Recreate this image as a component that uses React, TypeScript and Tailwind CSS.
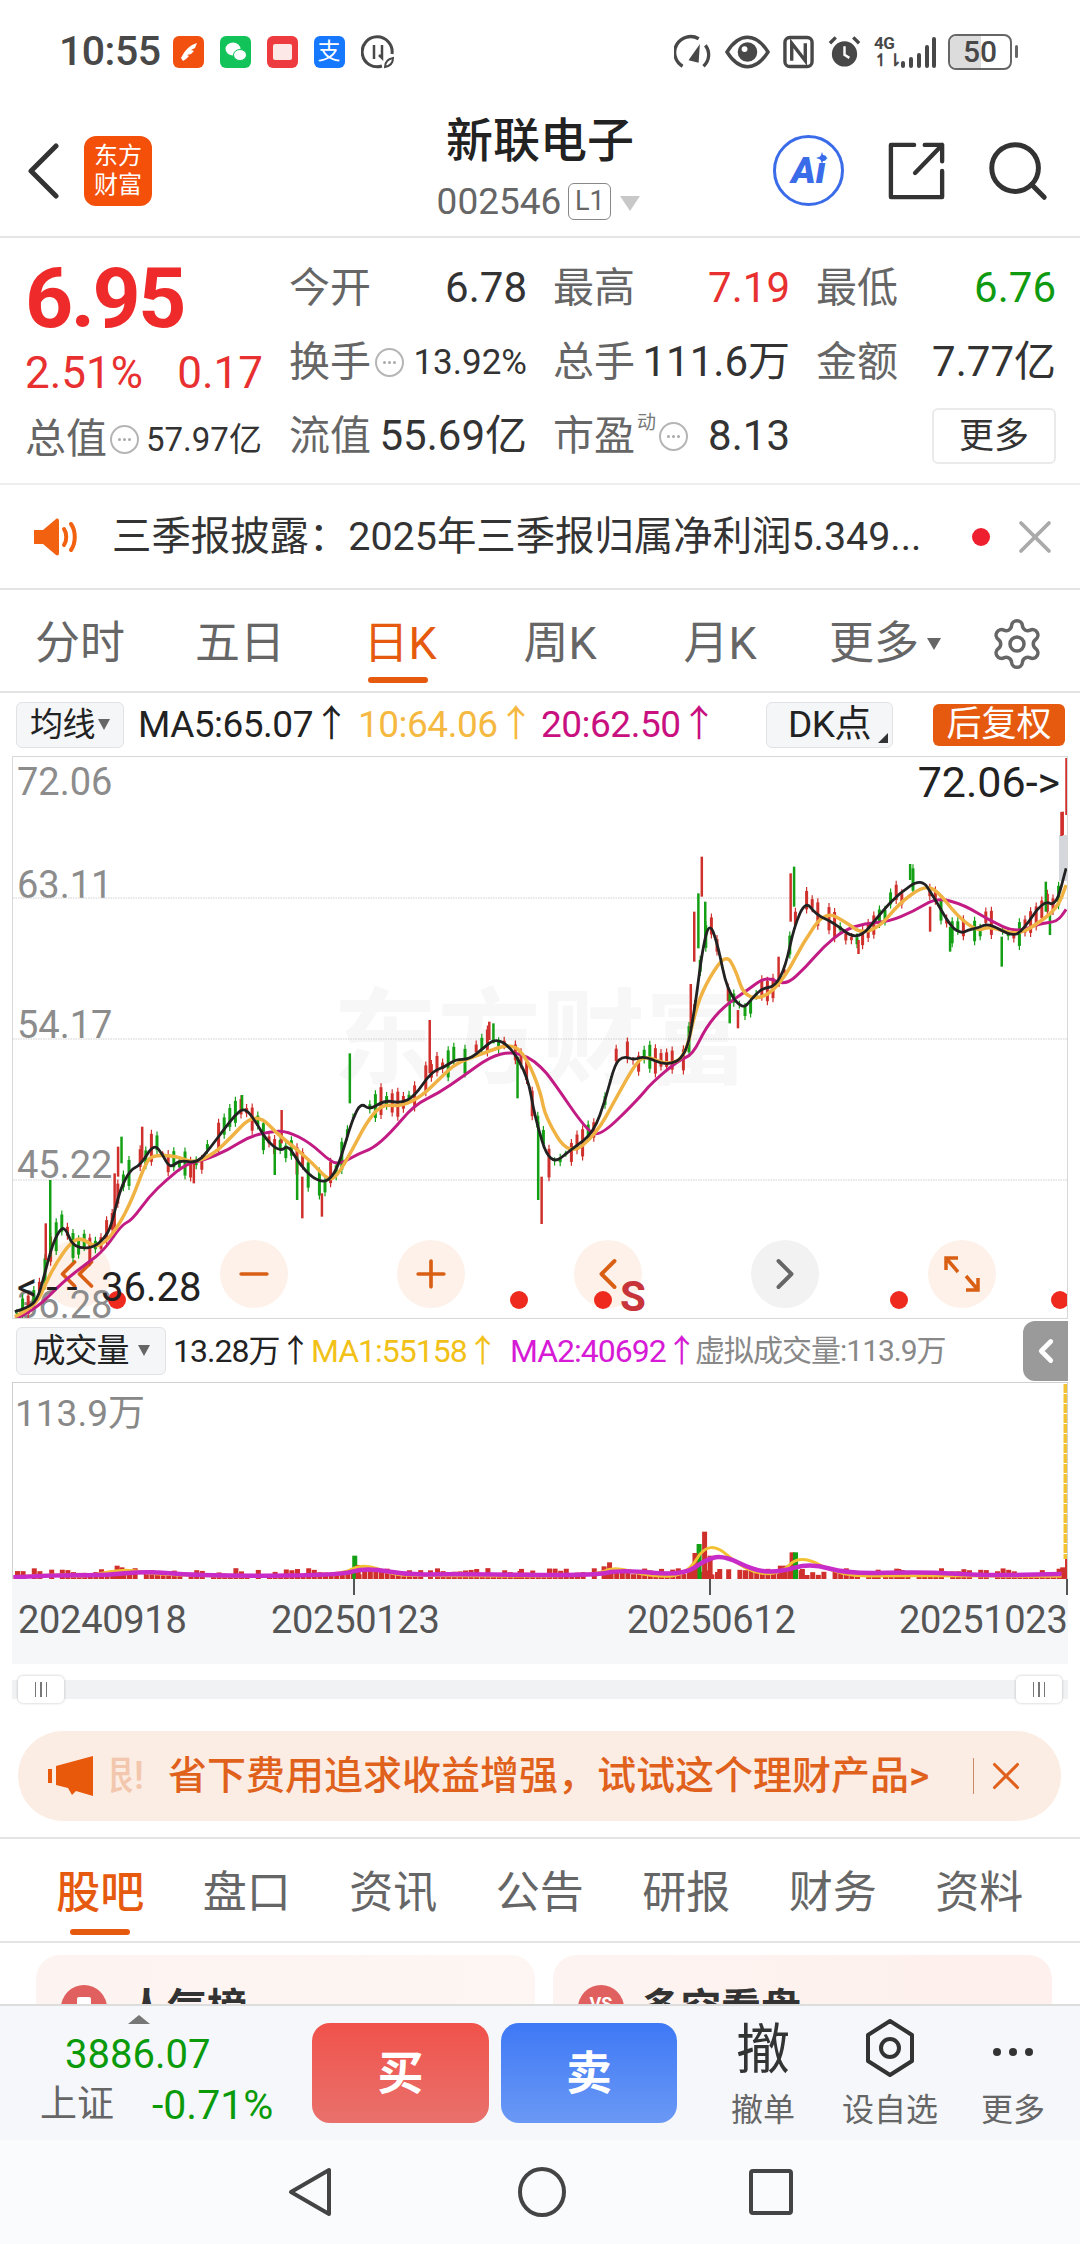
import React from 'react';
import { Settings, Search, ChevronLeft, ChevronRight, Minus, Plus, ChevronsLeft, X } from 'lucide-react';

type Pt = number[];

// traced from the crops, each with its own offset and scale
const z8 = (p: Pt[]) => p.map(([x, y]) => [x / 2.904, 1000 + y / 3]);
const z9 = (p: Pt[]) => p.map(([x, y]) => [540 + x / 2.904, 780 + y / 3]);
const z4 = (p: Pt[]) => p.map(([x, y]) => [x / 1.452, 1000 + y / 3]);
const z5 = (p: Pt[]) => p.map(([x, y]) => [x / 1.452, 1360 + y / 3]);

const ma5 = [
  ...z8([[40,935],[75,925],[105,900],[125,830],[150,730],[175,682],[190,690],[205,730],[230,745],[270,742],[300,715],[320,680],[345,570],[375,510],[405,495],[445,430],[470,465],[490,505],[520,480],[570,490],[610,440],[650,385],[680,345],[708,322],[740,365],[770,420],[810,455],[835,435],[865,490],[905,535],[945,548],[975,510],[1000,430],[1020,360],[1045,308],[1070,330],[1115,300],[1160,310],[1200,290],[1250,215],[1290,200],[1320,178],[1360,178],[1400,145],[1435,115],[1480,140],[1530,230]]),
  ...z4([[775,350],[797,500],[830,445],[860,400]]),
  ...z9([[190,950],[215,850],[240,828],[270,840],[300,828],[365,858],[420,830],[445,700],[470,500],[490,425],[515,500],[540,630],[585,688],[610,660],[640,625],[680,620],[710,560],[735,440],[768,362],[800,405],[850,428],[920,485],[990,395],[1040,340],[1105,295],[1140,350],[1190,440],[1220,460],[1240,450],[1270,443],[1300,430],[1370,470],[1400,450],[1460,360],[1495,380],[1525,265]]),
];
const ma10 = [
  ...z8([[40,950],[100,920],[130,850],[160,790],[200,730],[232,712],[270,740],[300,730],[340,680],[380,600],[420,490],[440,465],[510,468],[560,490],[620,460],[670,410],[720,355],[760,355],[800,400],[850,440],[905,490],[950,540],[975,530],[1020,450],[1060,370],[1105,312],[1160,320],[1220,290],[1280,230],[1320,190],[1400,160],[1485,128],[1530,180],[1568,280]]),
  ...z4([[790,350],[825,470],[865,400]]),
  ...z9([[215,960],[280,840],[310,830],[370,855],[420,830],[450,680],[490,590],[538,522],[565,570],[590,650],[650,655],[710,590],[760,490],[825,392],[890,430],[930,460],[985,440],[1040,370],[1110,318],[1150,330],[1210,410],[1270,455],[1300,438],[1380,465],[1430,440],[1500,385],[1525,315]]),
];
const ma20 = [
  ...z8([[40,958],[100,930],[180,845],[250,790],[300,750],[350,675],[380,660],[430,590],[480,540],[540,490],[590,480],[660,450],[720,410],[780,395],[830,392],[900,430],[960,488],[990,490],[1040,460],[1080,445],[1130,400],[1200,315],[1270,280],[1340,230],[1420,170],[1480,155],[1530,170],[1568,200]]),
  ...z4([[800,240],[850,390],[870,410]]),
  ...z9([[280,960],[320,910],[400,840],[440,825],[480,740],[530,680],[600,630],[655,588],[710,618],[770,560],[820,500],[880,450],[940,430],[1010,425],[1080,395],[1150,352],[1230,375],[1300,420],[1380,458],[1450,430],[1500,425],[1525,388]]),
];

const RED = '#d0302c';
const GREEN = '#14a014';

function smooth(p: Pt[]) {
  let d = `M${p[0][0].toFixed(1)} ${p[0][1].toFixed(1)}`;
  for (let i = 1; i < p.length - 1; i++) {
    const mx = (p[i][0] + p[i + 1][0]) / 2;
    const my = (p[i][1] + p[i + 1][1]) / 2;
    d += ` Q${p[i][0].toFixed(1)} ${p[i][1].toFixed(1)} ${mx.toFixed(1)} ${my.toFixed(1)}`;
  }
  const l = p[p.length - 1];
  return `${d} L${l[0].toFixed(1)} ${l[1].toFixed(1)}`;
}

function yAt(line: Pt[], x: number) {
  for (let i = 1; i < line.length; i++) {
    if (x <= line[i][0]) {
      const t = (x - line[i - 1][0]) / (line[i][0] - line[i - 1][0] || 1);
      return line[i - 1][1] + t * (line[i][1] - line[i - 1][1]);
    }
  }
  return line[line.length - 1][1];
}

let seed = 7;
const rnd = () => {
  seed = (seed * 16807) % 2147483647;
  return seed / 2147483647;
};

const candles: { x: number; y1: number; y2: number; c: string }[] = [];
for (let x = 16; x < 1058; x += 5.6) {
  const y = yAt(ma5, x);
  const up = rnd() * 18 + 2;
  const down = rnd() * 18 + 2;
  const c = rnd() > 0.5 ? RED : GREEN;
  if (rnd() > 0.12) candles.push({ x, y1: y - up, y2: Math.min(y + down, 1318), c });
}

const spikes = (p: Pt[], conv: (q: Pt[]) => Pt[], c: string) =>
  p.map(([x, a, b]) => {
    const [[px, y1], [, y2]] = conv([[x, a], [x, b]]);
    return { x: px, y1, y2, c };
  });

const wicks = [
  ...spikes([[143,540,770],[1013,160,310],[1560,365,600],[350,410,490],[1430,70,130],[1500,170,295],[700,285,330],[795,440,525],[860,470,600]], z8, GREEN),
  ...spikes([[130,670,780],[875,530,655],[932,580,650],[1245,60,220],[815,330,430],[410,380,480],[560,490,550],[1418,65,120],[340,440,530],[330,520,690]], z8, RED),
  ...spikes([[785,530,672]], z4, RED),
  ...spikes([[467,230,350],[445,395,545],[435,612,745],[725,280,425],[690,530,620],[1130,380,455],[1515,95,165],[572,690,745],[922,480,522]], z9, RED),
  ...spikes([[457,340,505],[477,365,470],[735,260,380],[1072,252,300],[1188,440,515],[1338,470,560],[1466,305,395],[1478,400,465],[548,640,730]], z9, GREEN),
];

const volBars: { x: number; h: number; c: string }[] = [];
for (let x = 14; x < 1066; x += 5.6) {
  const r = rnd();
  if (r < 0.86) volBars.push({ x, h: 4 + rnd() * 7, c: RED });
}
const volSpikes = z5([[70,632],[165,620],[172,625],[510,590],[515,618],[880,610],[872,622],[1018,518],[1010,555],[1004,582],[998,625],[1026,590],[1040,630],[1145,580],[1150,580],[1135,620],[1128,620],[1160,630],[1545,588],[1538,625],[620,634],[750,636],[1270,632],[1300,630]]);
const volMa1 = z5([[18,655],[80,645],[120,655],[180,628],[230,650],[490,652],[525,612],[570,648],[620,650],[860,652],[890,622],[940,652],[995,652],[1028,540],[1080,635],[1130,650],[1160,585],[1220,652],[1300,650],[1540,652]]);
const volMa2 = z5([[18,655],[80,648],[150,650],[210,636],[280,650],[490,650],[530,626],[590,648],[650,645],[860,650],[900,632],[990,650],[1025,600],[1050,590],[1095,635],[1130,640],[1175,612],[1230,645],[1340,638],[1430,650],[1540,645]]);

const Info = () => (
  <span className="flex w-[29px] h-[29px] shrink-0 items-center justify-center gap-[2px] rounded-full border-2 border-[#b5b5b5]">
    <i className="w-[3px] h-[3px] rounded-full bg-[#aaa]" />
    <i className="w-[3px] h-[3px] rounded-full bg-[#aaa]" />
    <i className="w-[3px] h-[3px] rounded-full bg-[#aaa]" />
  </span>
);

function Cell({ label, extra, value, cls }: { label: string; extra?: React.ReactNode; value: string; cls: string }) {
  return (
    <div className="flex items-center justify-between h-[74px] whitespace-nowrap">
      <span className="flex items-center text-[41px] text-[#666] leading-none">{label}{extra}</span>
      <span className={cls}>{value}</span>
    </div>
  );
}

function StatusBar() {
  return (
    <div className="flex items-center justify-between h-[75px] pt-[28px] pl-[59px] pr-[62px] shrink-0">
      <div className="flex items-center">
        <span className="text-[41px] leading-none font-medium text-[#484848] tracking-[-0.5px]">10:55</span>
        <div className="flex items-center gap-[16px] ml-[12px]">
          <svg width="31" height="32" viewBox="0 0 31 32"><rect width="31" height="32" rx="6" fill="#f2500f" /><path d="M8 22C12 14 17 9 24 7l-2 5-4 2 3 1-3 3-4 1 2 1-3 3-3 2z" fill="#fff" /></svg>
          <svg width="31" height="32" viewBox="0 0 31 32"><rect width="31" height="32" rx="6" fill="#12c35a" /><ellipse cx="13" cy="13" rx="7.5" ry="6.5" fill="#fff" /><ellipse cx="20" cy="19" rx="6.5" ry="5.5" fill="#fff" stroke="#12c35a" /></svg>
          <svg width="31" height="32" viewBox="0 0 31 32"><rect width="31" height="32" rx="6" fill="#ee3b3f" /><rect x="6" y="8" width="19" height="16" rx="2" fill="#fde8e8" /></svg>
          <span className="flex w-[31px] h-[32px] items-center justify-center rounded-[6px] bg-[#1677ff] text-[23px] leading-none text-white">支</span>
          <svg width="34" height="36" viewBox="0 0 34 36" fill="none" stroke="#484848" strokeWidth="3"><path d="M21 32A15 15 0 1 1 31 20" /><path d="M13 11v14M21 11v13l-3-3" strokeWidth="2.5" /><path d="M24 33c0-5 3-8 8-9 0 5-3 8-8 9z" strokeWidth="2" /></svg>
        </div>
      </div>
      <div className="flex items-center">
        <svg width="38" height="36" viewBox="0 0 40 36" fill="none" stroke="#484848" strokeWidth="3.5"><path d="M9 33A16 16 0 0 1 26 4" /><path d="M33 11a16 16 0 0 1-2 22" /><path d="M17 26l9-13-1 15z" fill="#484848" strokeWidth="2" /></svg>
        <svg width="45" height="34" viewBox="0 0 46 34" fill="none" className="ml-[13px]"><path d="M2 17C9 6 16 2 23 2s14 4 21 15c-7 11-14 15-21 15S9 28 2 17z" stroke="#484848" strokeWidth="3.5" /><circle cx="23" cy="17" r="10" fill="#484848" /><circle cx="20" cy="14" r="3" fill="#fff" /></svg>
        <svg width="31" height="34" viewBox="0 0 32 34" fill="none" stroke="#484848" strokeWidth="3.5" className="ml-[13px]"><rect x="2" y="2" width="28" height="30" rx="5" /><path d="M9 26V8l14 18V8" /></svg>
        <svg width="35" height="36" viewBox="0 0 36 36" fill="none" stroke="#484848" className="ml-[13px]"><circle cx="18" cy="20" r="12" fill="#484848" strokeWidth="2" /><path d="M18 12v9l5 3" stroke="#fff" strokeWidth="2.5" /><path d="M3 9l6-6M33 9l-6-6" strokeWidth="3.5" /></svg>
        <span className="ml-[12px] flex flex-col items-start w-[24px] text-[17px] font-bold leading-[17px] tracking-[-0.5px] text-[#484848]"><span>4G</span><span>↿⇂</span></span>
        <svg width="35" height="34" viewBox="0 0 35 34" fill="#484848" className="ml-[3px]"><rect x="0" y="26" width="4" height="7" rx="2" /><rect x="8" y="22" width="4" height="11" rx="2" /><rect x="16" y="18" width="4" height="15" rx="2" /><rect x="24" y="10" width="4" height="23" rx="2" /><rect x="31" y="2" width="4" height="31" rx="2" /></svg>
        <span className="ml-[12px] relative flex w-[64px] h-[36px] items-center justify-center overflow-hidden rounded-[8px] border-2 border-[#666] text-[30px] font-medium leading-none text-[#484848]">
          <i className="absolute left-0 top-0 h-full w-[31px] bg-[#dcdcdc]" />
          <span className="relative">50</span>
        </span>
        <i className="ml-[3px] w-[3px] h-[13px] rounded-full bg-[#666]" />
      </div>
    </div>
  );
}

function Header() {
  return (
    <div className="flex items-center h-[163px] pt-[22px] border-b-2 border-[#e6e6e6] shrink-0">
      <div className="flex items-center w-[310px] pl-[27px] mt-[8px]">
        <svg width="32" height="56" viewBox="0 0 32 56" fill="none" stroke="#333" strokeWidth="5" strokeLinecap="round" strokeLinejoin="round"><path d="M29 3L4 28l25 25" /></svg>
        <div className="ml-[25px] flex flex-col w-[68px] h-[70px] items-center justify-center rounded-[12px] bg-[#f4500a] text-[24px] leading-[29px] text-white">
          <span>东方</span>
          <span>财富</span>
        </div>
      </div>
      <div className="flex flex-1 flex-col items-center">
        <span className="text-[47px] font-medium leading-[58px] text-[#222]">新联电子</span>
        <div className="flex items-center mt-[12px] -ml-[3px]">
          <span className="text-[37px] leading-[40px] text-[#666]">002546</span>
          <span className="ml-[7px] flex w-[43px] h-[37px] items-center justify-center rounded-[6px] border border-[#888] text-[27px] leading-none text-[#666]">L1</span>
          <i className="ml-[9px] mt-[4px] border-x-[10px] border-t-[15px] border-x-transparent border-t-[#c8c8c8]" />
        </div>
      </div>
      <div className="flex items-center w-[310px] mt-[8px]">
        <span className="relative flex w-[71px] h-[71px] shrink-0 ml-[3px] items-center justify-center rounded-full border-[3.5px] border-[#3a6be8] text-[37px] font-black italic leading-none text-[#3a6be8]">
          Ai
          <svg width="12" height="12" viewBox="0 0 12 12" className="absolute right-[13px] top-[14px]"><path d="M6 0l1.500 4.500L12 6 7.500 7.500 6 12 4.500 7.500 0 6l4.500-1.500z" fill="#3a6be8" /></svg>
        </span>
        <svg width="58" height="60" viewBox="0 0 60 60" fill="none" stroke="#333" strokeWidth="4.5" strokeLinecap="round" strokeLinejoin="round" className="ml-[44px] shrink-0"><path d="M27 3H3v54h53V30" /><path d="M28 32L56 3M38 3h18v17" /></svg>
        <Search size={70} color="#333" strokeWidth={1.7} className="ml-[37px] shrink-0" />
      </div>
    </div>
  );
}

function Quote() {
  const num = 'text-[42px] leading-none text-[#333]';
  return (
    <div className="flex h-[247px] pl-[25px] pt-[13px] border-b-2 border-[#eee] shrink-0">
      <div className="flex flex-col w-[264px]">
        <span className="h-[92px] text-[84px] font-bold leading-[96px] tracking-[-2.500px] text-[#ee2a2a]">6.95</span>
        <div className="flex justify-between w-[238px] h-[60px] items-center text-[44px] leading-none text-[#e83030]">
          <span>2.51%</span>
          <span>0.17</span>
        </div>
        <div className="flex items-center h-[70px] mt-[1px] whitespace-nowrap">
          <span className="text-[41px] leading-none text-[#666]">总值</span>
          <span className="ml-[3px]"><Info /></span>
          <span className="ml-[7px] text-[33px] leading-none text-[#333]">57.97亿</span>
        </div>
      </div>
      <div className="grid grid-cols-[238px_237px_240px] gap-x-[26px] grid-rows-[74px_74px_74px]">
        <Cell label="今开" value="6.78" cls={num} />
        <Cell label="最高" value="7.19" cls="text-[42px] leading-none text-[#e83030]" />
        <Cell label="最低" value="6.76" cls="text-[42px] leading-none text-[#109a10]" />
        <Cell label="换手" extra={<span className="ml-[4px]"><Info /></span>} value="13.92%" cls="text-[35px] leading-none text-[#333]" />
        <Cell label="总手" value="111.6万" cls={num} />
        <Cell label="金额" value="7.77亿" cls={num} />
        <Cell label="流值" value="55.69亿" cls={num} />
        <Cell
          label="市盈"
          extra={
            <span className="flex items-center">
              <span className="-mt-[28px] ml-[2px] text-[19px] leading-none text-[#777]">动</span>
              <span className="ml-[3px]"><Info /></span>
            </span>
          }
          value="8.13"
          cls={num}
        />
        <div className="flex items-center justify-end h-[74px]">
          <span className="flex w-[124px] h-[56px] items-center justify-center rounded-[6px] border-2 border-[#eaeaea] text-[35px] leading-none text-[#333]">更多</span>
        </div>
      </div>
    </div>
  );
}

function Notice() {
  return (
    <div className="flex items-center h-[105px] pl-[33px] border-b-2 border-[#e4e4e4] shrink-0">
      <svg width="46" height="38" viewBox="0 0 46 38" fill="none" className="shrink-0">
        <path d="M1 12h9L23 1c2-1 3 0 3 2v32c0 2-1 3-3 2L10 26H1z" fill="#f2610f" />
        <path d="M31 11c3 4 3 12 0 16M38 6c5 7 5 19 0 26" stroke="#f2610f" strokeWidth="4" strokeLinecap="round" />
      </svg>
      <span className="ml-[33px] w-[813px] shrink-0 whitespace-nowrap text-[39.400px] leading-none text-[#333]">三季报披露：2025年三季报归属净利润5.349...</span>
      <i className="ml-[47px] w-[18px] h-[18px] shrink-0 rounded-full bg-[#ee2030]" />
      <X size={56} color="#aaa" strokeWidth={1.6} className="ml-[17px] shrink-0" />
    </div>
  );
}

function PeriodTabs() {
  const tabs = ['分时', '五日', '日K', '周K', '月K'];
  return (
    <div className="flex items-center h-[103px] border-b-2 border-[#e4e4e4] shrink-0">
      <div className="grid grid-cols-6 w-[960px] h-full">
        {tabs.map((t) => (
          <div key={t} className={`relative flex items-center justify-center pt-[6px] text-[45px] leading-none ${t === '日K' ? 'text-[#e65a0f]' : 'text-[#666]'}`}>
            {t}
            {t === '日K' && <i className="absolute bottom-[8px] left-[48px] w-[60px] h-[6px] rounded-full bg-[#e65a0f]" />}
          </div>
        ))}
        <div className="flex items-center justify-center pt-[6px] pl-[10px] text-[45px] leading-none text-[#666]">
          更多
          <i className="ml-[8px] border-x-[7px] border-t-[12px] border-x-transparent border-t-[#666]" />
        </div>
      </div>
      <Settings size={56} color="#666" strokeWidth={1.5} className="ml-[29px] mt-[6px]" />
    </div>
  );
}

function MaRow() {
  return (
    <div className="flex items-center h-[63px] pl-[16px] text-[37px] leading-none whitespace-nowrap tracking-[-0.5px] shrink-0">
      <span className="flex w-[108px] h-[46px] items-center justify-center rounded-[6px] border border-[#e0e2e6] bg-[#f5f6f8] text-[33px] text-[#222]">
        均线
        <i className="ml-[3px] border-x-[6px] border-t-[11px] border-x-transparent border-t-[#666]" />
      </span>
      <span className="ml-[14px] w-[220px] text-[#222]">MA5:65.07↑</span>
      <span className="w-[183px] text-[#f5b942]">10:64.06↑</span>
      <span className="w-[225px] text-[#c8107f]">20:62.50↑</span>
      <span className="relative flex w-[127px] h-[46px] items-center justify-center rounded-[6px] border border-[#e0e2e6] bg-[#f5f6f8] text-[#222]">
        DK点
        <i className="absolute bottom-[4px] right-[4px] border-l-[10px] border-b-[10px] border-l-transparent border-b-[#333]" />
      </span>
      <span className="ml-[40px] flex w-[132px] h-[42px] items-center justify-center rounded-[6px] bg-[#e65a0f] text-[35px] text-white tracking-normal">后复权</span>
    </div>
  );
}

function MainChart() {
  const gridY = [898, 1039, 1180];
  const dots = [116, 518, 602, 898, 1059];
  const label = 'absolute left-[4px] text-[38px] leading-none text-[#8c8c8c]';
  return (
    <div className="relative w-[1056px] h-[563px] ml-[12px] overflow-hidden border border-[#d8d8d8] shrink-0">
      <span className="absolute left-[320px] top-[232px] whitespace-nowrap text-[104px] font-bold leading-none text-[#f7f7f7]">东方财富</span>
      <div className="absolute left-[30px] top-[483px] flex gap-[109px]">
        <span className="flex w-[68px] h-[68px] items-center justify-center rounded-full bg-[#fdf1ea]"><ChevronsLeft size={58} color="#d95f14" strokeWidth={1.5} /></span>
        <span className="flex w-[68px] h-[68px] items-center justify-center rounded-full bg-[#fdf1ea]"><Minus size={44} color="#d95f14" strokeWidth={2} /></span>
        <span className="flex w-[68px] h-[68px] items-center justify-center rounded-full bg-[#fdf1ea]"><Plus size={44} color="#d95f14" strokeWidth={2} /></span>
        <span className="flex w-[68px] h-[68px] items-center justify-center rounded-full bg-[#fdf1ea]"><ChevronLeft size={52} color="#d95f14" strokeWidth={1.8} /></span>
        <span className="flex w-[68px] h-[68px] items-center justify-center rounded-full bg-[#f2f2f2]"><ChevronRight size={52} color="#666" strokeWidth={1.8} /></span>
        <span className="flex w-[68px] h-[68px] items-center justify-center rounded-full bg-[#fdf1ea]">
          <svg width="36" height="36" viewBox="0 0 36 36" fill="none" stroke="#d95f14" strokeWidth="3.500"><path d="M2 14V2h12M2 2l12 14M34 22v12H22M34 34L22 20" /></svg>
        </span>
      </div>
      <span className={`${label} top-[6px]`}>72.06</span>
      <span className={`${label} top-[109px]`}>63.11</span>
      <span className={`${label} top-[249px]`}>54.17</span>
      <span className={`${label} top-[389px]`}>45.22</span>
      <span className={`${label} top-[529px]`}>36.28</span>
      <svg width="1056" height="563" viewBox="12 757 1056 563" className="absolute left-0 top-0" fill="none">
        {gridY.map((y) => (
          <line key={y} x1="12" x2="1068" y1={y} y2={y} stroke="#cfcfcf" strokeWidth="1" strokeDasharray="1.500 1" />
        ))}
        {candles.map((c, i) => (
          <g key={i}>
            <line x1={c.x} x2={c.x} y1={c.y1} y2={c.y2} stroke={c.c} strokeWidth="1.200" />
            <line x1={c.x} x2={c.x} y1={c.y1 + 4} y2={c.y2 - 4} stroke={c.c} strokeWidth="3" />
          </g>
        ))}
        {wicks.map((c, i) => (
          <line key={i} x1={c.x} x2={c.x} y1={c.y1} y2={c.y2} stroke={c.c} strokeWidth="2.500" />
        ))}
        <rect x="1058" y="835" width="9" height="46" fill="#d4d7db" />
        <line x1="1065.500" x2="1065.500" y1="758" y2="815" stroke={RED} strokeWidth="2.500" />
        <line x1="1060.500" x2="1060.500" y1="812" y2="836" stroke={RED} strokeWidth="2.500" />
        <path d={smooth(ma20)} stroke="#c21c84" strokeWidth="3" strokeLinejoin="round" />
        <path d={smooth(ma10)} stroke="#f0b343" strokeWidth="3.500" strokeLinejoin="round" />
        <path d={smooth(ma5)} stroke="#222" strokeWidth="2.800" strokeLinejoin="round" />
        {dots.map((x) => (
          <circle key={x} cx={x} cy="1300" r="9" fill="#ee2a1f" />
        ))}
      </svg>
      <span className="absolute left-[4px] top-[511px] flex text-[40px] leading-none text-[#222]">
        <span className="w-[84px] tracking-[9px]">&lt;--</span>
        <span>36.28</span>
      </span>
      <span className="absolute right-[7px] top-[4px] text-[43px] leading-none text-[#222]">72.06-&gt;</span>
      <span className="absolute left-[607px] top-[519px] text-[42px] font-bold leading-none text-[#c7343a]">S</span>
    </div>
  );
}

function VolRow() {
  return (
    <div className="relative flex items-center h-[63px] pl-[16px] text-[32px] leading-none whitespace-nowrap tracking-[-1px] shrink-0">
      <span className="flex w-[150px] h-[48px] items-center justify-center rounded-[6px] border border-[#e0e2e6] bg-[#f5f6f8] text-[33px] text-[#222]">
        成交量
        <i className="ml-[9px] border-x-[6px] border-t-[11px] border-x-transparent border-t-[#666]" />
      </span>
      <span className="ml-[7px] w-[138px] text-[#222]">13.28万↑</span>
      <span className="w-[199px] text-[#f2c118]">MA1:55158↑</span>
      <span className="w-[185px] text-[#d61ad6]">MA2:40692↑</span>
      <span className="text-[30px] text-[#888]">虚拟成交量:113.9万</span>
      <span className="absolute right-[12px] top-[2px] flex w-[45px] h-[60px] items-center justify-center rounded-l-[12px] bg-[#9a9a9a]">
        <ChevronLeft size={38} color="#fff" strokeWidth={3} />
      </span>
    </div>
  );
}

function VolChart() {
  return (
    <div className="relative w-[1056px] h-[197px] ml-[12px] overflow-hidden border-x border-t border-[#d0d0d0] shrink-0">
      <span className="absolute left-[2px] top-[12px] text-[37px] leading-none text-[#888]">113.9万</span>
      <svg width="1056" height="197" viewBox="12 1384 1056 197" className="absolute left-0 top-0" fill="none">
        {volBars.map((b, i) => (
          <rect key={i} x={b.x} y={1580 - b.h} width="5" height={b.h} fill={b.c} />
        ))}
        {volSpikes.map(([x, y], i) => (
          <rect key={i} x={x} y={y} width="5" height={1580 - y} fill={i === 3 || i === 8 || i === 14 ? GREEN : RED} />
        ))}
        <line x1="1064.500" x2="1064.500" y1="1385" y2="1560" stroke="#f2c232" strokeWidth="4" strokeDasharray="9 1" />
        <path d={smooth(volMa1)} stroke="#f2c232" strokeWidth="3" />
        <path d={smooth(volMa2)} stroke="#c82cc8" strokeWidth="4.500" />
      </svg>
    </div>
  );
}

function DateAxis() {
  return (
    <div className="relative flex w-[1056px] h-[85px] ml-[12px] bg-[#f6f7f9] text-[38px] leading-none text-[#555] shrink-0">
      <i className="absolute left-[341px] top-0 w-[2px] h-[16px] bg-[#555]" />
      <i className="absolute left-[697px] top-0 w-[2px] h-[16px] bg-[#555]" />
      <i className="absolute right-0 top-0 w-[2px] h-[16px] bg-[#555]" />
      <div className="flex items-start w-full pt-[22px] pl-[6px] tracking-[-0.3px] whitespace-nowrap">
        <span className="w-[253px]">20240918</span>
        <span className="w-[356px]">20250123</span>
        <span className="w-[272px]">20250612</span>
        <span>20251023</span>
      </div>
    </div>
  );
}

const Handle = () => (
  <span className="flex w-[46px] h-[27px] items-center justify-center gap-[4px] rounded-[5px] bg-white shadow-[0_0_3px_rgba(0,0,0,0.25)]">
    <i className="w-[1.500px] h-[15px] bg-[#777]" />
    <i className="w-[1.500px] h-[15px] bg-[#777]" />
    <i className="w-[1.500px] h-[15px] bg-[#777]" />
  </span>
);

function Slider() {
  return (
    <div className="flex items-center justify-between w-[1056px] h-[19px] ml-[12px] mt-[16px] px-[6px] bg-[#f1f2f4] shrink-0">
      <Handle />
      <Handle />
    </div>
  );
}

function Promo() {
  return (
    <div className="flex items-center w-[1043px] h-[90px] ml-[18px] mt-[32px] pl-[30px] rounded-full bg-[#fcede4] text-[39px] font-medium leading-none whitespace-nowrap text-[#e0611c] shrink-0">
      <svg width="46" height="40" viewBox="0 0 46 40" fill="#e8590c" className="shrink-0">
        <rect x="0" y="13" width="4" height="14" />
        <path d="M8 10L45 0v40L28 35l-4 4-4-7-12-3z" />
      </svg>
      <span className="ml-[17px] flex w-[33px] justify-end overflow-hidden text-[#f3c7ad]">
        <span className="shrink-0">限!</span>
      </span>
      <span className="ml-[24px] w-[775px]">省下费用追求收益增强，试试这个理财产品&gt;</span>
      <i className="ml-[30px] w-[1px] h-[36px] bg-[#c98a66]" />
      <X size={46} color="#e0611c" strokeWidth={1.6} className="ml-[9px]" />
    </div>
  );
}

function ContentTabs() {
  const tabs = ['股吧', '盘口', '资讯', '公告', '研报', '财务', '资料'];
  return (
    <div className="grid grid-cols-[repeat(7,146.5px)] h-[106px] mt-[16px] pl-[27px] border-y-2 border-[#e4e4e4] shrink-0">
      {tabs.map((t, i) => (
        <div key={t} className={`relative flex items-center justify-center pt-[6px] text-[44px] leading-none ${i === 0 ? 'font-medium text-[#e65a0f]' : 'text-[#666]'}`}>
          {t}
          {i === 0 && <i className="absolute bottom-[6px] left-[43px] w-[60px] h-[6px] rounded-full bg-[#e65a0f]" />}
        </div>
      ))}
    </div>
  );
}

function Cards() {
  return (
    <div className="flex h-[61px] flex-1 gap-[18px] overflow-hidden pl-[36px] pt-[12px]">
      <div className="flex w-[499px] h-[140px] shrink-0 items-start pl-[25px] pt-[30px] rounded-[24px] bg-gradient-to-r from-[#fdf4f1] to-[#fef6f3]">
        <span className="flex w-[46px] h-[46px] items-start justify-center pt-[12px] rounded-full bg-[#e06060]">
          <i className="w-[14px] h-[14px] rounded-[2px] bg-white" />
        </span>
        <span className="ml-[20px] text-[40px] font-bold leading-[48px] text-[#333]">人气榜</span>
        <span className="ml-[12px] text-[28px] leading-[56px] text-[#aaa]">&gt;</span>
      </div>
      <div className="flex w-[499px] h-[140px] shrink-0 items-start pl-[25px] pt-[30px] rounded-[24px] bg-gradient-to-r from-[#fdf4f1] to-[#fef0ec]">
        <span className="flex w-[46px] h-[46px] items-start justify-center pt-[10px] rounded-full bg-[#e06060] text-[18px] font-bold leading-none text-white">VS</span>
        <span className="ml-[17px] text-[40px] font-bold leading-[48px] text-[#333]">多空看盘</span>
      </div>
    </div>
  );
}

function BottomBar() {
  return (
    <div className="flex h-[136px] border-t-2 border-[#ddd] bg-[#f5f7fa] shrink-0">
      <div className="relative flex flex-col w-[312px] pl-[40px] pt-[27px]">
        <i className="absolute left-[128px] top-[9px] border-x-[11px] border-b-[9px] border-x-transparent border-b-[#777]" />
        <span className="ml-[25px] text-[40px] leading-[44px] text-[#0a9a0a]">3886.07</span>
        <div className="flex items-center mt-[5px] whitespace-nowrap">
          <span className="text-[37px] leading-[46px] text-[#666]">上证</span>
          <span className="ml-[38px] text-[41px] leading-[46px] text-[#0a9a0a]">-0.71%</span>
        </div>
      </div>
      <div className="flex gap-[12px] pt-[17px]">
        <span className="flex w-[177px] h-[100px] items-center justify-center rounded-[18px] bg-gradient-to-b from-[#f0524a] to-[#e9706c] text-[46px] font-bold leading-none text-white">买</span>
        <span className="flex w-[176px] h-[100px] items-center justify-center rounded-[18px] bg-gradient-to-b from-[#3e78f5] to-[#6a98f5] text-[46px] font-bold leading-none text-white">卖</span>
      </div>
      <div className="flex flex-1 pl-[48px] pt-[13px] text-[32px] leading-none text-[#666] whitespace-nowrap">
        <div className="flex flex-col w-[76px] items-center">
          <span className="h-[66px] text-[54px] leading-[64px] text-[#333]">撤</span>
          <span className="mt-[9px]">撤单</span>
        </div>
        <div className="flex flex-col w-[144px] ml-[17px] items-center">
          <svg width="52" height="60" viewBox="0 0 52 60" fill="none" stroke="#333" strokeWidth="4" className="h-[66px] -mt-[4px] mb-[4px]"><path d="M26 3l22 14v26L26 57 4 43V17z" strokeLinejoin="round" /><circle cx="26" cy="30" r="9" /></svg>
          <span className="mt-[9px]">设自选</span>
        </div>
        <div className="flex flex-col w-[76px] ml-[13px] items-center">
          <span className="flex h-[66px] items-center gap-[8px]">
            <i className="w-[8px] h-[8px] rounded-full bg-[#333]" />
            <i className="w-[8px] h-[8px] rounded-full bg-[#333]" />
            <i className="w-[8px] h-[8px] rounded-full bg-[#333]" />
          </span>
          <span className="mt-[9px]">更多</span>
        </div>
      </div>
    </div>
  );
}

function NavBar() {
  return (
    <div className="flex items-center justify-center h-[104px] bg-[#fafbfc] shrink-0">
      <svg width="44" height="50" viewBox="0 0 44 50" fill="none" stroke="#444" strokeWidth="4" strokeLinejoin="round"><path d="M41 3v44L3 25z" /></svg>
      <svg width="48" height="50" viewBox="0 0 48 50" fill="none" stroke="#444" strokeWidth="4" className="ml-[186px]"><ellipse cx="24" cy="25" rx="22" ry="23" /></svg>
      <svg width="44" height="46" viewBox="0 0 44 46" fill="none" stroke="#444" strokeWidth="4" strokeLinejoin="round" className="ml-[183px]"><rect x="2" y="2" width="40" height="42" rx="2" /></svg>
    </div>
  );
}

export default function App() {
  return (
    <div className="flex flex-col w-[1080px] h-[2244px] overflow-hidden bg-white font-[Roboto,'Noto_Sans_CJK_SC',sans-serif]">
      <StatusBar />
      <Header />
      <Quote />
      <Notice />
      <PeriodTabs />
      <MaRow />
      <MainChart />
      <VolRow />
      <VolChart />
      <DateAxis />
      <Slider />
      <Promo />
      <ContentTabs />
      <Cards />
      <BottomBar />
      <NavBar />
    </div>
  );
}
